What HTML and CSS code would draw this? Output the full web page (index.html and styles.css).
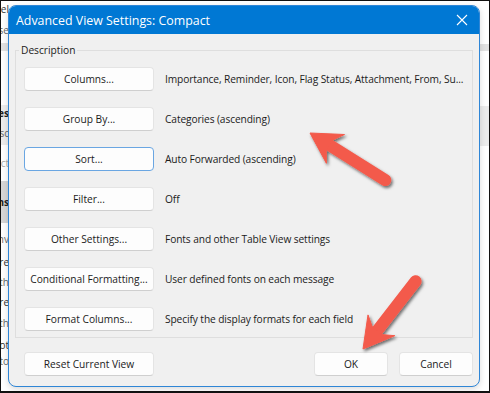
FILE: index.html
```html
<!DOCTYPE html>
<html>
<head>
<meta charset="utf-8">
<link rel="stylesheet" href="styles.css">
</head>
<body>
<div class="screen">
  <div class="backdrop">
    <div class="leftlist">
      <div class="frag f-dark" style="height:16px">Channel</div>
      <div class="frag f-grey" style="height:26px">Close</div>
      <div class="frag band-line" style="height:8px"></div>
      <div class="frag" style="height:54px"></div>
      <div class="frag band-light f-bold" style="height:16px">Categories</div>
      <div class="frag band-light f-grey" style="height:24px">Desc</div>
      <div class="frag f-light" style="height:36px">Subject</div>
      <div class="frag band-dark f-bold" style="height:42px">Items</div>
      <div class="frag f-grey" style="height:32px">Conv</div>
      <div class="frag f-dark" style="height:14px">Share</div>
      <div class="frag f-grey" style="height:26px">With</div>
      <div class="frag f-dark" style="height:14px">Share</div>
      <div class="frag f-grey" style="height:28px">With</div>
      <div class="frag f-dark" style="height:16px">Not</div>
      <div class="frag f-grey" style="height:16px">Auto</div>
    </div>
    <div class="rightlist">
      <div class="rfrag" style="height:43px"></div>
      <div class="rfrag band-line" style="height:7px"></div>
      <div class="rfrag" style="height:55px"></div>
      <div class="rfrag band-light" style="height:40px"></div>
    </div>
  </div>

  <div class="dialog">
    <div class="titlebar">
      <span class="title">Advanced View Settings: Compact</span>
      <svg class="close" width="12" height="12" viewBox="0 0 12 12"><path d="M1 1 L11 11 M11 1 L1 11" stroke="#ffffff" stroke-width="1.1" fill="none"/></svg>
    </div>
    <div class="body">
      <div class="group">
        <span class="legend">Description</span>
        <div class="row"><button class="btn">Columns...</button><span class="desc">Importance, Reminder, Icon, Flag Status, Attachment, From, Su...</span></div>
        <div class="row"><button class="btn">Group By...</button><span class="desc">Categories (ascending)</span></div>
        <div class="row"><button class="btn focus">Sort...</button><span class="desc">Auto Forwarded (ascending)</span></div>
        <div class="row"><button class="btn">Filter...</button><span class="desc">Off</span></div>
        <div class="row"><button class="btn">Other Settings...</button><span class="desc">Fonts and other Table View settings</span></div>
        <div class="row"><button class="btn">Conditional Formatting...</button><span class="desc">User defined fonts on each message</span></div>
        <div class="row"><button class="btn">Format Columns...</button><span class="desc">Specify the display formats for each field</span></div>
      </div>
      <div class="footer">
        <button class="btn">Reset Current View</button>
        <div class="spacer"></div>
        <button class="btn small">OK</button>
        <button class="btn small">Cancel</button>
      </div>
    </div>
  </div>

  <svg class="arrows" width="490" height="393" viewBox="0 0 490 393">
    <defs>
      <filter id="sh" x="-20%" y="-20%" width="140%" height="140%">
        <feDropShadow dx="1.5" dy="2" stdDeviation="1.5" flood-color="#000" flood-opacity="0.55"/>
      </filter>
    </defs>
    <g filter="url(#sh)" fill="#f35a4b" stroke="#f35a4b">
      <line x1="329.5" y1="145.2" x2="385.3" y2="180.1" stroke-width="12" stroke-linecap="round"/>
      <polygon stroke-width="1" stroke-linejoin="round" points="310,133 344.5,134.5 332.7,140.1 326.3,150.3 326.4,163.3"/>
      <line x1="377.1" y1="330.9" x2="415.6" y2="281.3" stroke-width="12" stroke-linecap="round"/>
      <polygon stroke-width="1" stroke-linejoin="round" points="363,349 368,314.9 372.4,327.2 381.8,334.6 394.8,335.7"/>
    </g>
  </svg>
</div>
</body>
</html>
```

FILE: styles.css
```css
html, body {
  margin: 0;
  padding: 0;
}
body {
  width: 490px;
  height: 393px;
  overflow: hidden;
  background: #111;
}
.screen {
  position: relative;
  width: 488px;
  height: 390px;
  margin: 1px 1px 2px 1px;
  background: #ffffff;
  overflow: hidden;
  font-family: "Open Sans", "Noto Sans", sans-serif;
  color: #1b1b1b;
}
.backdrop {
  display: flex;
  justify-content: space-between;
  height: 100%;
}
.leftlist {
  width: 8px;
  display: flex;
  flex-direction: column;
}
.frag {
  display: flex;
  justify-content: flex-end;
  align-items: center;
  overflow: hidden;
  white-space: nowrap;
  font-size: 10px;
}
.f-dark { color: #333; }
.f-grey { color: #666; }
.f-light { color: #aaa; }
.f-bold { font-weight: 700; color: #222; }
.band-line { background: #e2e2e2; }
.band-light { background: #ececec; }
.band-dark { background: #d6d6d6; }
.rightlist {
  width: 9px;
  display: flex;
  flex-direction: column;
}

.dialog {
  position: absolute;
  left: 7px;
  top: 4px;
  width: 470px;
  height: 380px;
  border: 1px solid #2f86d6;
  border-radius: 8px;
  overflow: hidden;
  background: #f0f0f0;
  display: flex;
  flex-direction: column;
  box-shadow: 0 2px 6px rgba(0,0,0,0.15);
}
.titlebar {
  height: 28px;
  flex: none;
  background: #0078d4;
  display: flex;
  align-items: center;
  justify-content: space-between;
  padding: 0 11px 0 7px;
}
.title {
  color: #ffffff;
  font-size: 12.4px;
}
.close {
  display: block;
}
.body {
  flex: 1;
  display: flex;
  flex-direction: column;
  padding: 16px 6px 0 6px;
}
.group {
  position: relative;
  border: 1px solid #dedede;
  padding: 16px 8px 6px 8px;
  display: flex;
  flex-direction: column;
  gap: 16px;
}
.legend {
  position: absolute;
  left: 3px;
  top: -8px;
  padding: 0 2px;
  background: #f0f0f0;
  font-size: 10.2px;
  line-height: 14px;
}
.row {
  display: flex;
  align-items: center;
  gap: 11px;
  height: 24px;
}
.btn {
  flex: none;
  width: 130px;
  height: 24px;
  box-sizing: border-box;
  border: 1px solid #e4e4e4;
  border-bottom-color: #cfcfcf;
  border-radius: 4px;
  background: #fdfdfd;
  font-family: inherit;
  font-size: 10.2px;
  color: #1b1b1b;
  padding: 0;
  white-space: nowrap;
}
.btn.focus {
  border: 1px solid #6aa6e2;
}
.btn.small {
  width: 74px;
}
.desc {
  font-size: 10.2px;
  letter-spacing: -0.1px;
  white-space: nowrap;
}
.footer {
  display: flex;
  align-items: center;
  gap: 11px;
  padding: 14px 0 0 9px;
}
.spacer {
  flex: 1;
}
.arrows {
  position: absolute;
  left: -1px;
  top: -1px;
}
```
